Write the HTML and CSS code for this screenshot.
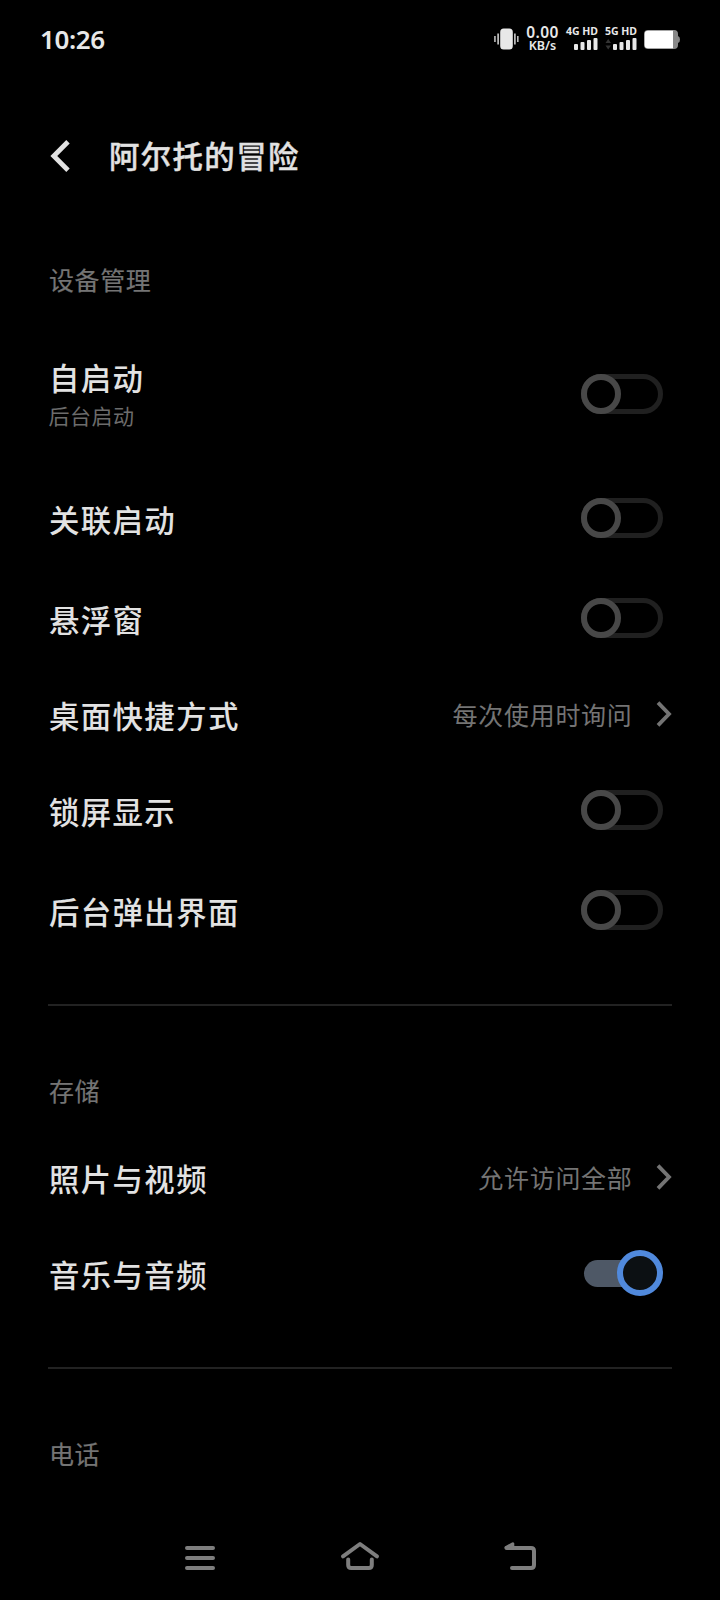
FILE: index.html
```html
<!DOCTYPE html>
<html lang="zh-CN">
<head>
<meta charset="utf-8">
<title>阿尔托的冒险</title>
<link rel="stylesheet" href="styles.css">
</head>
<body>
<div class="screen">
  <div class="status">
    <span class="clock">10:26</span>
    <div class="indicators">
      <svg class="vibrate" width="25" height="22" viewBox="0 0 25 22" fill="#e8e8e8"><rect x="6.2" y="0.5" width="12.6" height="21" rx="3.5"/><rect x="0.3" y="8" width="1.3" height="6"/><rect x="3.4" y="5.5" width="1.4" height="11"/><rect x="20.2" y="5.5" width="1.4" height="11"/><rect x="23.2" y="8" width="1.3" height="6"/></svg>
      <div class="speed"><span class="rate">0.00</span><span class="unit">KB/s</span></div>
      <div class="sim">
        <span>4G HD</span>
        <svg width="32" height="12" viewBox="0 0 32 12" fill="#e8e8e8"><rect x="8" y="6" width="4" height="6" rx="1"/><rect x="14.5" y="4" width="4" height="8" rx="1"/><rect x="21" y="2" width="4" height="10" rx="1"/><rect x="27.5" y="0" width="4" height="12" rx="1"/></svg>
      </div>
      <div class="sim sim-second">
        <span>5G HD</span>
        <svg width="32" height="12" viewBox="0 0 32 12" fill="#e8e8e8"><path d="M0.5 5 3.2 1 6 5ZM0.5 7.5 3.2 11.5 6 7.5Z" fill="#333"/><rect x="8" y="6" width="4" height="6" rx="1"/><rect x="14.5" y="4" width="4" height="8" rx="1"/><rect x="21" y="2" width="4" height="10" rx="1"/><rect x="27.5" y="0" width="4" height="12" rx="1"/></svg>
      </div>
      <svg class="battery" width="36" height="19" viewBox="0 0 36 19"><path d="M4 0H30Q34 0 34 4V6Q36 6.5 36 9.5T34 13V15Q34 19 30 19H4Q0 19 0 15V4Q0 0 4 0Z" fill="#888"/><path d="M4 .7H29V18.3H4Q.7 18.3 .7 15V4Q.7 .7 4 .7Z" fill="#fff"/></svg>
    </div>
  </div>

  <header class="header">
    <svg class="back" width="20" height="32" viewBox="0 0 20 32" fill="none" stroke="#e2e2e2" stroke-width="4.8"><path d="M18 1.8 3.8 16 18 30.2"/></svg>
    <h1 class="title">阿尔托的冒险</h1>
  </header>

  <main>
    <section class="group group-device">
      <h2 class="label">设备管理</h2>
      <div class="row row-tall"><div class="text"><span class="name">自启动</span><span class="hint">后台启动</span></div><span class="switch"></span></div>
      <div class="row"><span class="name">关联启动</span><span class="switch"></span></div>
      <div class="row"><span class="name">悬浮窗</span><span class="switch"></span></div>
      <div class="row row-link"><span class="name">桌面快捷方式</span><span class="value">每次使用时询问</span><svg class="chevron" width="16" height="26" viewBox="0 0 16 26"><path d="M2 1.7 13 13 2 24.3"/></svg></div>
      <div class="row"><span class="name">锁屏显示</span><span class="switch"></span></div>
      <div class="row"><span class="name">后台弹出界面</span><span class="switch"></span></div>
    </section>
    <section class="group">
      <h2 class="label">存储</h2>
      <div class="row row-link"><span class="name">照片与视频</span><span class="value">允许访问全部</span><svg class="chevron" width="16" height="26" viewBox="0 0 16 26"><path d="M2 1.7 13 13 2 24.3"/></svg></div>
      <div class="row"><span class="name">音乐与音频</span><span class="switch switch-on"></span></div>
    </section>
    <section class="group">
      <h2 class="label">电话</h2>
    </section>
  </main>

  <nav class="nav">
    <svg width="40" height="32" viewBox="0 0 40 32"><path d="M7 4H33M7 14H33M7 24H33"/></svg>
    <svg width="40" height="32" viewBox="0 0 40 32"><path d="M3 12.3 20 0 37 12.3M8.2 15.5V21Q8.2 24 11.2 24H28.8Q31.8 24 31.8 21V15.5"/></svg>
    <svg width="40" height="32" viewBox="0 0 40 32"><path d="M6.5 4H31Q34 4 34 7V21Q34 24 31 24H12"/><path d="M6 3.6 12.8 -.3V3.6Z" fill="#7e7e7e" stroke-width="3"/></svg>
  </nav>
</div>
</body>
</html>
```

FILE: styles.css
```css
*, *::before, *::after { box-sizing: border-box; }
body {
  margin: 0;
  background: #000;
  font-family: "Noto Sans CJK SC", sans-serif;
}
.screen {
  width: 720px;
  height: 1600px;
  overflow: hidden;
  display: flex;
  flex-direction: column;
  background: #000;
}
.status {
  height: 78px;
  padding: 0 40px;
  display: flex;
  align-items: center;
  justify-content: space-between;
  color: #e8e8e8;
}
.clock {
  margin-top: -1px;
  font: 600 26px/30px "Noto Sans", sans-serif;
  letter-spacing: -0.4px;
}
.indicators { display: flex; align-items: center; }
.vibrate { margin-top: -1px; }
.speed {
  width: 34px;
  margin-left: 7px;
  display: flex;
  flex-direction: column;
  align-items: center;
  font-family: "Noto Sans", sans-serif;
  font-weight: 600;
  white-space: nowrap;
}
.rate { font-size: 15.5px; line-height: 13px; letter-spacing: .4px; }
.unit { font-size: 12.5px; line-height: 13px; }
.sim {
  width: 33px;
  margin-left: 5.5px;
  display: flex;
  flex-direction: column;
  align-items: flex-end;
  gap: 1px;
  margin-top: -2px;
  font: 700 10.5px/11px "Noto Sans", sans-serif;
  white-space: nowrap;
}
.sim-second { margin-left: 6px; }
.battery { margin: 1px 0 0 7px; }
.header {
  height: 156px;
  padding-left: 50px;
  display: flex;
  align-items: center;
}
.title {
  margin: -2px 0 0 39px;
  font-size: 30.4px;
  font-weight: 500;
  line-height: 44px;
  letter-spacing: 1.4px;
  color: #e2e2e2;
  -webkit-text-stroke: .4px #e2e2e2;
}
.group {
  margin: 0 48px;
  padding: 61px 0 44px;
  border-bottom: 2px solid #222;
}
.group:last-child { border: 0; }
.group-device { padding-top: 22px; }
.label {
  margin: 0 0 0 1px;
  height: 64px;
  font-size: 25px;
  font-weight: 400;
  line-height: 46px;
  letter-spacing: .6px;
  color: #747474;
  -webkit-text-stroke: .2px #747474;
}
.row {
  height: 100px;
  padding-right: 9.5px;
  display: flex;
  align-items: center;
}
.row-tall { height: 148px; }
.row-link { height: 92px; padding-right: 0; }
.text {
  margin-top: -2px;
  display: flex;
  flex-direction: column;
}
.name {
  margin-left: 1px;
  padding-top: 1px;
  font-size: 30.4px;
  font-weight: 500;
  line-height: 42px;
  letter-spacing: 1.4px;
  color: #e2e2e2;
}
.hint {
  margin-left: .5px;
  font-size: 21px;
  line-height: 34px;
  letter-spacing: .5px;
  color: #6c6c6c;
}
.value {
  margin-left: auto;
  font-size: 25px;
  line-height: 36px;
  letter-spacing: .7px;
  color: #747474;
}
.chevron {
  margin-left: 23.5px;
  fill: none;
  stroke: #747474;
  stroke-width: 3.8;
}
.switch {
  width: 81.5px;
  height: 40px;
  margin-left: auto;
  border: 5px solid #202020;
  border-radius: 20px;
}
.switch::before {
  content: "";
  display: block;
  width: 40px;
  height: 40px;
  margin: -5px;
  border: 6px solid #484848;
  border-radius: 50%;
  background: #000;
}
.switch-on {
  width: 79px;
  height: 46px;
  margin-right: -.5px;
  border: 0;
  border-radius: 0;
  display: flex;
  flex-direction: row-reverse;
  align-items: center;
}
.switch-on::before {
  z-index: 1;
  flex: none;
  width: 46px;
  height: 46px;
  margin: 0;
  border-color: #5089dc;
  background: #0c1013;
}
.switch-on::after {
  content: "";
  flex: none;
  width: 56px;
  height: 27px;
  margin-right: -23px;
  border-radius: 14px 0 0 14px;
  background: #4e5866;
}
.nav {
  margin-top: auto;
  height: 56px;
  padding: 0 180px;
  display: flex;
  justify-content: space-between;
}
.nav svg {
  overflow: visible;
  fill: none;
  stroke: #7e7e7e;
  stroke-width: 4;
  stroke-linecap: round;
  stroke-linejoin: round;
}
```
